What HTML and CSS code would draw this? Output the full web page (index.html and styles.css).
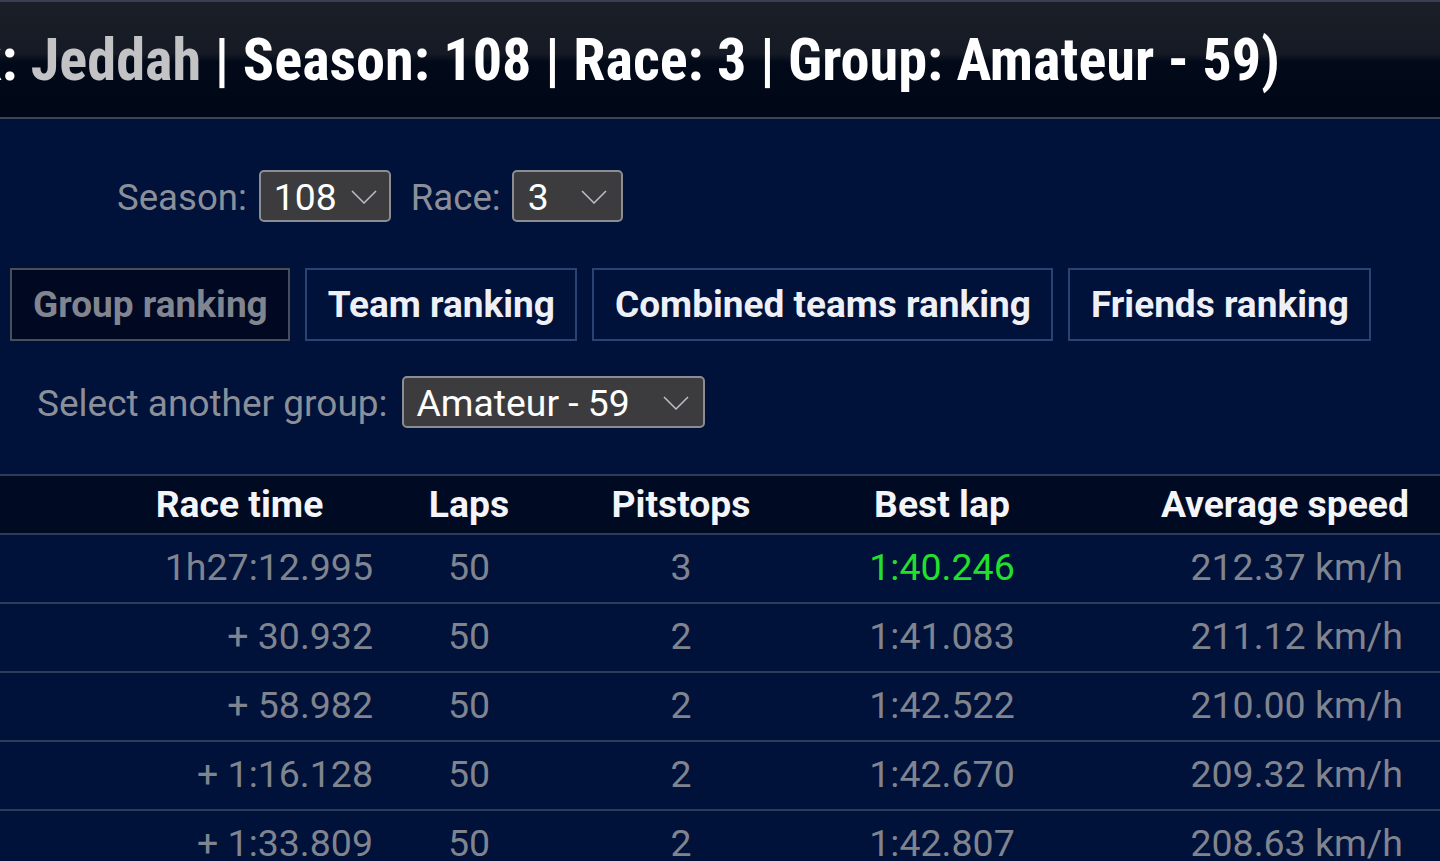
FILE: index.html
```html
<!DOCTYPE html>
<html>
<head>
<meta charset="utf-8">
<link rel="stylesheet" href="styles.css">
</head>
<body>
<header class="topbar">
  <h1 class="title">(Track: <span class="track">Jeddah</span> | Season: 108 | Race: 3 | Group: Amateur - 59)</h1>
</header>
<main class="content">
  <div class="filters">
    <span class="label">Season:</span>
    <div class="select sel-season"><span>108</span><svg class="chev" viewBox="0 0 26 14"><path d="M1 1 L13 13 L25 1" /></svg></div>
    <span class="label label-race">Race:</span>
    <div class="select sel-race"><span>3</span><svg class="chev" viewBox="0 0 26 14"><path d="M1 1 L13 13 L25 1" /></svg></div>
  </div>
  <nav class="tabs">
    <div class="tab active">Group ranking</div>
    <div class="tab">Team ranking</div>
    <div class="tab">Combined teams ranking</div>
    <div class="tab">Friends ranking</div>
  </nav>
  <div class="groupsel">
    <span class="label">Select another group:</span>
    <div class="select sel-group"><span>Amateur - 59</span><svg class="chev" viewBox="0 0 26 14"><path d="M1 1 L13 13 L25 1" /></svg></div>
  </div>
  <table class="results">
    <colgroup>
      <col class="c0"><col class="c1"><col class="c2"><col class="c3"><col class="c4"><col class="c5">
    </colgroup>
    <thead>
      <tr><th></th><th>Race time</th><th>Laps</th><th>Pitstops</th><th>Best lap</th><th class="avg">Average speed</th></tr>
    </thead>
    <tbody>
      <tr><td></td><td class="time">1h27:12.995</td><td>50</td><td>3</td><td class="best">1:40.246</td><td class="avg">212.37 km/h</td></tr>
      <tr><td></td><td class="time">+ 30.932</td><td>50</td><td>2</td><td>1:41.083</td><td class="avg">211.12 km/h</td></tr>
      <tr><td></td><td class="time">+ 58.982</td><td>50</td><td>2</td><td>1:42.522</td><td class="avg">210.00 km/h</td></tr>
      <tr><td></td><td class="time">+ 1:16.128</td><td>50</td><td>2</td><td>1:42.670</td><td class="avg">209.32 km/h</td></tr>
      <tr><td></td><td class="time">+ 1:33.809</td><td>50</td><td>2</td><td>1:42.807</td><td class="avg">208.63 km/h</td></tr>
    </tbody>
  </table>
</main>
</body>
</html>
```
FILE: styles.css
```css
html, body {
  margin: 0;
  padding: 0;
  background: #00113a;
  height: 861px;
  overflow: hidden;
}
body {
  font-family: Roboto, "Liberation Sans", sans-serif;
  color: #ffffff;
}
.topbar {
  height: 115px;
  border-top: 2px solid #394050;
  border-bottom: 2px solid #3a4455;
  background: linear-gradient(to bottom, #1a1f28 0%, #151a24 45%, #020a1a 52%, #000818 100%);
  display: flex;
  justify-content: flex-end;
  align-items: center;
  padding-right: 160px;
  overflow: hidden;
}
.title {
  margin: 0;
  flex-shrink: 0;
  white-space: nowrap;
  font-size: 58.3px;
  font-weight: 700;
  font-stretch: 84%;
  color: #ffffff;
  line-height: 1;
  padding-top: 2px;
}
.track {
  color: #c3c3c6;
}
.content {
  display: flex;
  flex-direction: column;
}
.label {
  font-size: 36.6px;
  color: #8a8f99;
  padding-top: 3px;
}
.filters {
  display: flex;
  align-items: center;
  padding-left: 117px;
  margin-top: 51px;
  height: 52px;
}
.label-race {
  margin-left: 20px;
}
.select {
  box-sizing: border-box;
  height: 52px;
  background: #3c3c3e;
  border: 2px solid #8b8d92;
  border-radius: 5px;
  display: flex;
  align-items: center;
  justify-content: space-between;
  font-size: 37.3px;
  color: #ffffff;
  padding: 2px 12px 0 13px;
}
.sel-season {
  width: 132px;
  margin-left: 12px;
}
.sel-race {
  width: 111px;
  margin-left: 11px;
  padding-left: 14px;
  padding-right: 14px;
}
.sel-group {
  width: 303px;
  margin-left: 14px;
  padding-right: 14px;
}
.chev {
  width: 26px;
  height: 14px;
  fill: none;
  stroke: #bdbfc4;
  stroke-width: 1.5;
}
.tabs {
  display: flex;
  gap: 15px;
  padding-left: 10px;
  margin-top: 46px;
}
.tab {
  box-sizing: border-box;
  height: 73px;
  border: 2px solid #2b4373;
  display: flex;
  align-items: center;
  padding: 0 20px 0 21px;
  font-size: 37px;
  font-weight: 700;
  color: #eef0f6;
}
.tab.active {
  background: #000822;
  border-color: #4a4e58;
  color: #80858f;
}
.groupsel {
  display: flex;
  align-items: center;
  padding-left: 37px;
  margin-top: 35px;
  height: 52px;
}
.groupsel .label {
  font-size: 37px;
}
.results {
  margin-top: 46px;
  width: 1440px;
  border-collapse: collapse;
  table-layout: fixed;
}
.c0 { width: 74px; }
.c1 { width: 331px; }
.c2 { width: 128px; }
.c3 { width: 296px; }
.c4 { width: 226px; }
.c5 { width: 385px; }
.results th {
  background: #000a23;
  height: 56px;
  font-size: 37.3px;
  font-weight: 700;
  color: #f4f5f8;
  text-align: center;
  padding: 0 0 1px 0;
  border-top: 2px solid #2e3c5b;
  border-bottom: 2px solid #2e3c5b;
}
.results th.avg {
  text-align: right;
  padding-right: 31px;
}
.results td {
  height: 64px;
  font-size: 37.5px;
  color: #7f848e;
  text-align: center;
  padding: 0 0 3px 0;
  border-bottom: 2px solid #2e3c5b;
}
.results td.time {
  text-align: right;
  padding-right: 32px;
}
.results td.avg {
  text-align: right;
  padding-right: 37px;
}
.results td.best {
  color: #22e02c;
}
```
